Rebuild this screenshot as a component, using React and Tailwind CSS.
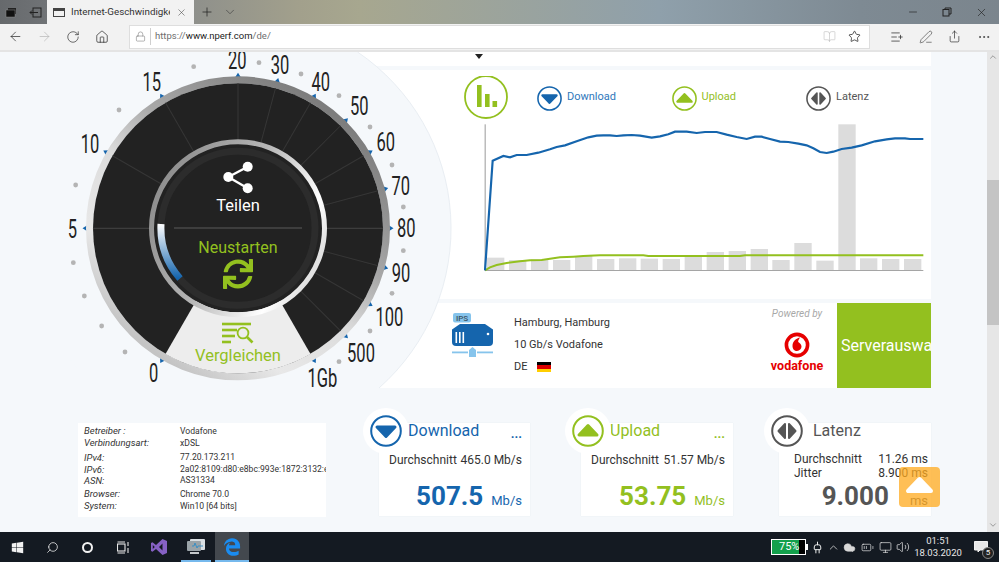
import React from "react";
import {
  X, Plus, ChevronDown, Minus, ArrowLeft, ArrowRight, RotateCw, Home, Lock,
  BookOpen, Star, ListPlus, Share, MoreHorizontal, Search, PenLine, ChevronUp,
  Cloud, Volume2, Monitor, Plug, BatteryMedium,
} from "lucide-react";
import { FaWindows, FaSync, FaEdgeLegacy } from "react-icons/fa";

const BLUE = "#1565ad";
const GREEN = "#93c01f";
const GREY = "#555555";

const ticks = [-150, -90, -60, -30, 0, 15, 30, 45, 60, 75, 90, 105, 120, 135, 150];
const lines = [-90, -60, -30, 0, 15, 30, 45, 60, 75, 90, 105, 120, 135];

const gaugeLabels = [
  ["20", 562, 30], ["30", 690, 45], ["40", 812, 97], ["50", 928, 168], ["60", 1007, 277],
  ["70", 1052, 407], ["80", 1069, 535], ["90", 1053, 668], ["100", 1018, 800], ["500", 933, 910],
  ["1Gb", 817, 985], ["0", 311, 970], ["5", 67, 537], ["10", 120, 283], ["15", 305, 95],
];

const dots = [
  [431, 50], [207, 180], [77, 405], [70, 638], [103, 738], [155, 828], [225, 906], [627, 38],
  [753, 72], [867, 137], [960, 231], [1026, 345], [1060, 471], [1060, 602], [1026, 730],
  [960, 843], [867, 935],
];

const bars = [
  [141, 593], [207, 600], [273, 598], [339, 600], [405, 588], [471, 597], [537, 595], [602, 596],
  [668, 597], [734, 590], [800, 576], [866, 573], [932, 567], [997, 600], [1063, 549], [1129, 602],
  [1195, 193], [1260, 595], [1326, 597], [1392, 597],
];

const downloadLine =
  "135,631 158,302 190,288 210,292 230,285 260,285 295,278 330,268 350,261 375,256 410,244 445,232 470,227 490,226 510,226 530,228 550,226 575,225 600,227 635,233 660,229 685,223 705,215 740,215 770,219 795,216 830,216 860,224 890,231 920,237 945,230 965,230 990,237 1020,245 1045,246 1075,251 1100,256 1120,265 1140,276 1160,279 1180,275 1205,267 1235,263 1265,256 1305,244 1340,238 1365,235 1395,235 1410,237 1450,237";
const uploadLine =
  "135,631 150,622 170,615 200,609 240,604 270,601 305,600 330,596 360,592 400,590 430,588 480,586 610,586 625,588 900,588 915,586 1450,586";

const RoundIcon = ({ kind, size = 24 }) => {
  const color = kind === "down" ? BLUE : kind === "up" ? GREEN : GREY;
  return (
    <svg width={size} height={size} viewBox="0 0 32 32" className="shrink-0">
      <circle cx="16" cy="16" r="14.8" fill="none" stroke={color} strokeWidth="2" />
      {kind === "down" && (
        <polygon points="7,12 25,12 16,21.5" fill={color} stroke={color} strokeWidth="3" strokeLinejoin="round" />
      )}
      {kind === "up" && (
        <polygon points="7,20 25,20 16,10.5" fill={color} stroke={color} strokeWidth="3" strokeLinejoin="round" />
      )}
      {kind === "lat" && (
        <>
          <polygon points="14,9 14,23 7.5,16" fill={color} stroke={color} strokeWidth="2" strokeLinejoin="round" />
          <polygon points="18,9 18,23 24.5,16" fill={color} stroke={color} strokeWidth="2" strokeLinejoin="round" />
        </>
      )}
    </svg>
  );
};

const Gauge = () => {
  const cx = 238;
  const cy = 228.3;
  return (
    <svg className="absolute left-0 top-0" width="460" height="480" viewBox="0 52 460 480">
      <defs>
        <linearGradient id="outerRing" x1="0.8" y1="0.1" x2="0.2" y2="0.9">
          <stop offset="0" stopColor="#7d7d7d" />
          <stop offset="0.35" stopColor="#a8a8a8" />
          <stop offset="0.55" stopColor="#dcdcdc" />
          <stop offset="0.8" stopColor="#e8e8e8" />
          <stop offset="1" stopColor="#c4c4c4" />
        </linearGradient>
        <linearGradient id="innerRing" x1="0.05" y1="0.25" x2="0.95" y2="0.7">
          <stop offset="0" stopColor="#8f8f8f" />
          <stop offset="0.45" stopColor="#b5b5b5" />
          <stop offset="0.85" stopColor="#ffffff" />
          <stop offset="1" stopColor="#e2e2e2" />
        </linearGradient>
        <linearGradient id="speedArc" gradientUnits="userSpaceOnUse" x1="0" y1="224" x2="0" y2="278">
          <stop offset="0" stopColor="#ffffff" />
          <stop offset="1" stopColor={BLUE} />
        </linearGradient>
      </defs>

      <circle cx={cx} cy={cy} r="213" fill="#f5f8fb" />
      <path d="M357.5 52 A213 213 0 0 1 379 388" fill="none" stroke="#e9eef3" strokeWidth="1" />

      {dots.map(([x, y]) => (
        <circle key={`${x}-${y}`} cx={x / 3 + 50} cy={y / 3 + 50} r="2.4" fill="#b4b4b4" />
      ))}
      {ticks.map((a) => (
        <polygon
          key={a}
          points={`${cx - 3.5},${cy - 150} ${cx + 3.5},${cy - 150} ${cx},${cy - 155.5}`}
          fill={BLUE}
          transform={`rotate(${a} ${cx} ${cy})`}
        />
      ))}

      <circle cx={cx} cy={cy} r="148.5" fill="none" stroke="url(#outerRing)" strokeWidth="7" />
      <circle cx={cx} cy={cy} r="145" fill="#222222" />
      <path d="M238 228.3 L165.5 353.9 A145 145 0 0 0 310.5 353.9 Z" fill="#ededed" />
      {lines.map((a) => (
        <line
          key={a}
          x1={cx}
          y1={cy - 145}
          x2={cx}
          y2={cy - 85}
          stroke={a === 90 || a === -90 ? "#454545" : "#363636"}
          strokeWidth="1"
          transform={`rotate(${a} ${cx} ${cy})`}
        />
      ))}

      <circle cx={cx} cy={cy} r="84" fill="#222222" />
      <circle cx={cx} cy={cy} r="86.5" fill="none" stroke="url(#innerRing)" strokeWidth="5" />
      <circle cx={cx} cy={cy} r="77" fill="none" stroke="#2c2c2c" strokeWidth="7" />
      <path d="M161 224 A77 77 0 0 0 180 278.5" fill="none" stroke="url(#speedArc)" strokeWidth="7" />
      <line x1="174" y1="228" x2="302" y2="228" stroke="#484848" strokeWidth="1.5" />

      <g stroke="#ffffff" strokeWidth="2.4">
        <line x1="247.7" y1="166.7" x2="228.3" y2="177" />
        <line x1="228.3" y1="177" x2="247.7" y2="188.3" />
      </g>
      <circle cx="247.7" cy="166.7" r="5" fill="#ffffff" />
      <circle cx="228.3" cy="177" r="5" fill="#ffffff" />
      <circle cx="247.7" cy="188.3" r="5" fill="#ffffff" />
      <text x={cx} y="211" textAnchor="middle" fontFamily="Roboto" fontSize="16.5" fill="#ffffff">Teilen</text>
      <text x={cx} y="253" textAnchor="middle" fontFamily="Roboto" fontSize="16" fill={GREEN}>Neustarten</text>
      <FaSync x="223" y="259" size="30" color={GREEN} />

      <g stroke={GREEN} strokeWidth="2.6">
        <line x1="222" y1="324" x2="251" y2="324" />
        <line x1="222" y1="330" x2="237" y2="330" />
        <line x1="222" y1="336" x2="235" y2="336" />
        <line x1="222" y1="342" x2="231" y2="342" />
      </g>
      <circle cx="243" cy="333" r="5.4" fill="none" stroke={GREEN} strokeWidth="1.8" />
      <line x1="247" y1="337" x2="252.5" y2="342.5" stroke={GREEN} strokeWidth="2.6" />
      <text x={cx} y="361" textAnchor="middle" fontFamily="Roboto" fontSize="16.5" fill={GREEN}>Vergleichen</text>

      {gaugeLabels.map(([t, x, y]) => (
        <text
          key={t}
          transform={`translate(${x / 3 + 50} ${y / 3 + 50}) scale(0.66 1)`}
          textAnchor="middle"
          dominantBaseline="central"
          fontFamily="Roboto"
          fontSize="25"
          fill="#222222"
        >
          {t}
        </text>
      ))}
    </svg>
  );
};

const LegendItem = ({ kind, label, color }) => (
  <div className="flex w-[134.5px] items-center gap-[5px]">
    <RoundIcon kind={kind} size={25} />
    <span className="mb-[2px] text-[11px]" style={{ color }}>{label}</span>
  </div>
);

const ChartPanel = () => (
  <div className="mt-[4px] h-[229px] bg-white pl-[164px] pt-[6px]">
    <div className="flex h-[44px] items-center">
      <svg width="44" height="44" viewBox="0 0 44 44" className="shrink-0">
        <circle cx="22" cy="21" r="21" fill="none" stroke={GREEN} strokeWidth="1.8" />
        <rect x="13" y="9" width="4.6" height="22" fill={GREEN} />
        <rect x="21" y="18" width="4.6" height="13" fill={GREEN} />
        <rect x="28.5" y="25" width="4.6" height="6" fill={GREEN} />
      </svg>
      <div className="ml-[29px] flex">
        <LegendItem kind="down" label="Download" color="#2f78bb" />
        <LegendItem kind="up" label="Upload" color={GREEN} />
        <LegendItem kind="lat" label="Latenz" color={GREY} />
      </div>
    </div>
    <svg width="441" height="152" viewBox="132 180 1323 456" className="ml-[20px] block">
      {bars.map(([x, y]) => (
        <rect key={x} x={x} y={y} width="52" height={631 - y} fill="#dcdcdc" />
      ))}
      <line x1="135.5" y1="193" x2="135.5" y2="632" stroke="#9a9a9a" strokeWidth="3" />
      <line x1="135" y1="631.5" x2="1450" y2="631.5" stroke="#a5a5a5" strokeWidth="3" />
      <polyline points={uploadLine} fill="none" stroke={GREEN} strokeWidth="6" />
      <polyline points={downloadLine} fill="none" stroke={BLUE} strokeWidth="6.5" />
    </svg>
  </div>
);

const ServerPanel = () => (
  <div className="mt-[4px] flex h-[85px] bg-white pl-[152px]">
    <svg width="42" height="46" viewBox="0 0 42 46" className="mt-[9px] shrink-0">
      <rect x="1" y="1" width="18" height="9.5" rx="2" fill="#86c4ec" />
      <text x="10" y="8.8" textAnchor="middle" fontFamily="Roboto" fontSize="8" fontWeight="500" fill="#3a4f60">IPS</text>
      <path d="M8 12 H33 L41 17.5 V30 Q41 34 37 34 H4 Q0 34 0 30 V17.5 Z" fill={BLUE} />
      <rect x="3.5" y="20" width="1.6" height="11" fill="#ffffff" />
      <rect x="7" y="20" width="1.6" height="11" fill="#ffffff" />
      <rect x="10.5" y="20" width="1.6" height="11" fill="#ffffff" />
      <circle cx="36" cy="22" r="1.3" fill="#ffffff" />
      <rect x="0" y="39.5" width="16" height="1.8" fill="#86c4ec" />
      <rect x="25" y="39.5" width="16" height="1.8" fill="#86c4ec" />
      <path d="M17 38 L20.5 35 L24 38 V45 H17 Z" fill="#86c4ec" />
    </svg>
    <div className="ml-[20px] flex w-[251px] flex-col pt-[10px] text-[11px] leading-[20px] text-[#333333]">
      <div>Hamburg, Hamburg</div>
      <div className="mt-[2px]">10 Gb/s Vodafone</div>
      <div className="mt-[2px] flex items-center">
        DE
        <span className="ml-[10px] flex h-[10px] w-[14px] flex-col">
          <span className="h-1/3 bg-black" />
          <span className="h-1/3 bg-[#dd0000]" />
          <span className="h-1/3 bg-[#ffce00]" />
        </span>
      </div>
    </div>
    <div className="flex w-[64px] shrink-0 flex-col items-center">
      <div className="mt-[3px] whitespace-nowrap text-[10px] italic text-[#a8a8a8]">Powered by</div>
      <svg width="26" height="26" viewBox="0 0 26 26" className="mt-[11px]">
        <circle cx="13" cy="13" r="10.6" fill="none" stroke="#e60000" strokeWidth="3.6" />
        <path d="M16.5 5.5 C12 6 8.5 9.5 8.5 14 C8.5 17 10.5 19 13 19 C15.6 19 17.5 17 17.5 14.6 C17.5 12 15.5 11 14.2 10 C14.2 8 15 6.5 16.5 5.5 Z" fill="#e60000" />
      </svg>
      <div className="mt-[1px] text-[12.5px] font-bold leading-[14px] text-[#e60000]">vodafone</div>
    </div>
    <div className="ml-[8px] flex w-[94px] shrink-0 items-center overflow-hidden bg-[#93c01f] pl-[4px] text-[16px] text-white">
      <span className="whitespace-nowrap">Serverauswahl</span>
    </div>
  </div>
);

const infoGroups = [
  { mt: "mt-[2px]", h: "leading-[12px]", rows: [["Betreiber :", "Vodafone"], ["Verbindungsart:", "xDSL"]] },
  {
    mt: "mt-[3px]",
    h: "leading-[11.5px]",
    rows: [["IPv4:", "77.20.173.211"], ["IPv6:", "2a02:8109:d80:e8bc:993e:1872:3132:e"], ["ASN:", "AS31334"]],
  },
  { mt: "mt-[1.5px]", h: "leading-[12px]", rows: [["Browser:", "Chrome 70.0"], ["System:", "Win10 [64 bits]"]] },
];

const InfoCard = () => (
  <div className="relative z-10 h-[94px] w-[248px] shrink-0 overflow-hidden bg-white pl-[6px] text-[9.5px] text-[#333333]">
    {infoGroups.map((g) => (
      <div key={g.rows[0][0]} className={`${g.mt} ${g.h} grid grid-cols-[96px_1fr]`}>
        {g.rows.map(([k, v]) => (
          <React.Fragment key={k}>
            <span className="italic">{k}</span>
            <span className="whitespace-nowrap text-[8.6px]">{v}</span>
          </React.Fragment>
        ))}
      </div>
    ))}
  </div>
);

const SpeedCard = ({ kind, title, color, avg, value, unit, dotted, ml, width }) => (
  <div className={`relative z-10 h-[93px] shrink-0 bg-white pl-[10px] pr-[8px] shadow-[0_0_1px_#dfe5ea] ${ml} ${width}`}>
    <div className="absolute -left-[16px] -top-[15px] flex h-[46px] w-[46px] items-center justify-center rounded-full bg-white">
      <RoundIcon kind={kind} size={32} />
    </div>
    <div className="flex h-[16px] items-center justify-between pl-[19px]">
      <span className="text-[16px] leading-[16px]" style={{ color }}>{title}</span>
      <span className="mt-[5px] text-[13px] font-bold leading-[16px]" style={{ color }}>{dotted}</span>
    </div>
    <div className="mt-[13px] flex justify-between whitespace-nowrap text-[12px] leading-[16px] text-[#333333]">
      <span>Durchschnitt</span>
      <span>{avg}</span>
    </div>
    <div className="mt-[10px] flex items-baseline justify-end" style={{ color }}>
      <span className="text-[26px] font-bold leading-[36px]">{value}</span>
      <span className="ml-[8px] text-[13px] leading-[36px]">{unit}</span>
    </div>
  </div>
);

const LatencyCard = () => (
  <div className="relative z-10 ml-[46px] h-[93px] w-[152px] shrink-0 bg-white pl-[15px] pr-[3px] shadow-[0_0_1px_#dfe5ea]">
    <div className="absolute -left-[15px] -top-[15px] flex h-[46px] w-[46px] items-center justify-center rounded-full bg-white">
      <RoundIcon kind="lat" size={32} />
    </div>
    <div className="flex h-[16px] items-center pl-[19px] text-[16px] leading-[16px] text-[#555555]">Latenz</div>
    <div className="mt-[13px] whitespace-nowrap text-[12px] leading-[14px] text-[#333333]">
      <div className="flex justify-between"><span>Durchschnitt</span><span>11.26 ms</span></div>
      <div className="flex justify-between"><span>Jitter</span><span>8.900 ms</span></div>
    </div>
    <div className="-mt-[2px] flex items-baseline justify-end text-[#555555]">
      <span className="text-[26px] font-bold leading-[36px]">9.000</span>
      <span className="ml-[21px] text-[13px] leading-[36px]">ms</span>
    </div>
    <div className="absolute left-[120px] top-[44px] flex h-[40px] w-[41px] items-start justify-center rounded-[4px] bg-[#ffaa1e]/75 pt-[9px]">
      <svg width="29" height="18" viewBox="0 0 29 18">
        <polygon points="3,15 26,15 14.5,3" fill="#ffffff" stroke="#ffffff" strokeWidth="4" strokeLinejoin="round" />
      </svg>
    </div>
  </div>
);

const TitleBar = () => (
  <div className="flex h-[24px] shrink-0 items-center bg-[linear-gradient(90deg,#66696c_0%,#85888b_14%,#a2a08c_30%,#a7a78f_36%,#8fa0ab_66%,#7e8a93_86%,#7b858d_100%)]">
    <svg width="47" height="24" viewBox="0 0 47 24" className="shrink-0">
      <rect x="8" y="8" width="8" height="6" fill="#222222" />
      <rect x="6" y="10" width="9" height="7" fill="#111111" stroke="#8a8a8a" strokeWidth="0.5" />
      <rect x="33" y="8" width="8" height="9" fill="none" stroke="#222222" />
      <path d="M38 12.5 H30 M32 10.5 L30 12.5 L32 14.5" fill="none" stroke="#222222" />
    </svg>
    <div className="flex h-full w-[147px] shrink-0 items-center bg-[#f2f2f2] pl-[6px] text-[#333333]">
      <span className="h-[9px] w-[12px] border border-[#444444] border-t-[3px]" />
      <span className="ml-[6px] w-[99px] overflow-hidden whitespace-nowrap text-[9.8px]">Internet-Geschwindigkeit</span>
      <X size={11} strokeWidth={1.2} className="ml-[6px] text-[#444444]" />
    </div>
    <Plus size={14} strokeWidth={1.3} className="ml-[6px] text-[#222222]" />
    <ChevronDown size={14} strokeWidth={1.2} className="ml-[9px] text-[#444444]" />
    <div className="flex-1" />
    <Minus size={12} strokeWidth={1.3} className="text-[#222222]" />
    <svg width="10" height="10" viewBox="0 0 10 10" className="ml-[23px]">
      <rect x="1" y="2.5" width="6" height="6.5" fill="none" stroke="#222222" />
      <path d="M3 2.5 V1 H9 V7 H7" fill="none" stroke="#222222" />
    </svg>
    <X size={13} strokeWidth={1.2} className="ml-[23px] mr-[11px] text-[#222222]" />
  </div>
);

const ToolBar = () => (
  <div className="flex h-[28px] shrink-0 items-center border-b-[2px] border-[#e4e4e4] bg-[#f2f2f2] pb-[1px]">
    <div className="flex w-[129px] shrink-0 items-center pl-[8px]">
      <ArrowLeft size={15} strokeWidth={1.1} className="text-[#222222]" />
      <ArrowRight size={15} strokeWidth={1.1} className="ml-[14px] text-[#b5b5b5]" />
      <RotateCw size={14} strokeWidth={1.1} className="ml-[14px] text-[#222222]" />
      <Home size={14} strokeWidth={1.2} className="ml-[15px] text-[#222222]" />
    </div>
    <div className="flex h-[24px] w-[741px] shrink-0 items-center border border-[#dedede] bg-white pl-[5px] text-[9.5px]">
      <Lock size={11} strokeWidth={1.2} className="text-[#777777]" />
      <span className="ml-[4px] mr-[4px] h-[17px] w-px bg-[#cfcfcf]" />
      <span className="text-[#6e6e6e]">https://</span>
      <span className="text-[#222222]">www.nperf.com</span>
      <span className="text-[#6e6e6e]">/de/</span>
      <div className="flex-1" />
      <BookOpen size={13} strokeWidth={1.1} className="text-[#bdbdbd]" />
      <Star size={13} strokeWidth={1.4} className="ml-[12px] mr-[8px] text-[#222222]" />
    </div>
    <ListPlus size={14} strokeWidth={1.2} className="ml-[20px] text-[#222222]" />
    <PenLine size={14} strokeWidth={1.1} className="ml-[15px] text-[#444444]" />
    <Share size={13} strokeWidth={1.2} className="ml-[15px] text-[#222222]" />
    <MoreHorizontal size={14} strokeWidth={1.3} className="ml-[16px] text-[#333333]" />
  </div>
);

const Scrollbar = () => (
  <div className="flex w-[12px] shrink-0 flex-col items-center justify-between bg-[#e6e6e6] pb-[2px]">
    <div className="flex w-full flex-col items-center">
      <ChevronUp size={10} className="text-[#8a8a8a]" />
      <div className="mt-[118px] h-[145px] w-full bg-[#c4c4c4]" />
    </div>
    <ChevronDown size={10} className="text-[#8a8a8a]" />
  </div>
);

const TaskBar = () => (
  <div className="flex h-[30px] shrink-0 items-center bg-[#141a22] text-[#f2f2f2]">
    <div className="flex w-[34px] justify-center"><FaWindows size={13} /></div>
    <div className="flex w-[36px] justify-center"><Search size={13} strokeWidth={1.4} className="-scale-x-100" /></div>
    <div className="flex w-[35px] justify-center">
      <span className="h-[11px] w-[11px] rounded-full border-[2px] border-[#f2f2f2]" />
    </div>
    <div className="flex w-[36px] justify-center">
      <svg width="13" height="13" viewBox="0 0 13 13" fill="none" stroke="#e8e8e8" strokeWidth="1.1">
        <rect x="0.5" y="3" width="7.5" height="7" />
        <path d="M0.5 1 H8 M0.5 12 H8 M11 1 V5 M11 7 V12" />
      </svg>
    </div>
    <div className="flex w-[36px] justify-center">
      <svg width="18" height="18" viewBox="0 0 18 18">
        <path d="M12.5 1 L17 3 V15 L12.5 17 L6 11 L2.5 13.8 L1 13 V5 L2.5 4.2 L6 7 Z M12.5 5.5 L9 9 L12.5 12.5 Z M2.8 7 V11 L4.8 9 Z" fill="#8661c5" fillRule="evenodd" />
      </svg>
    </div>
    <div className="relative flex h-full w-[38px] justify-center pt-[6px]">
      <svg width="18" height="17" viewBox="0 0 18 17">
        <rect x="3" y="1" width="15" height="11" rx="1" fill="#d8dee2" />
        <rect x="0" y="3" width="14" height="10" rx="1" fill="#9aa3a8" />
        <path d="M5 8 L7 8 L8 5 L10 10 L11 8 L16 8" fill="none" stroke="#3a8fc4" />
        <rect x="3" y="14" width="9" height="2" fill="#c4c8cb" />
      </svg>
      <span className="absolute bottom-0 left-[4px] h-[2px] w-[30px] bg-[#76b9ed]" />
    </div>
    <div className="relative flex h-full w-[34px] items-center justify-center bg-[#43484e]">
      <FaEdgeLegacy size={18} color="#1a8cf0" />
      <span className="absolute bottom-0 left-0 h-[2px] w-full bg-[#76b9ed]" />
    </div>
    <div className="flex-1" />
    <div className="relative flex h-[16px] w-[35px] items-center border border-white bg-black text-[11px] text-white">
      <span className="absolute inset-y-0 left-0 w-[27px] bg-[#13a04c]" />
      <span className="relative ml-[7px]">75%</span>
    </div>
    <span className="h-[6px] w-[2px] bg-white" />
    <Plug size={13} strokeWidth={1.8} className="ml-[3px] rotate-180" />
    <ChevronUp size={13} strokeWidth={1.3} className="ml-[3px]" />
    <Cloud size={13} fill="#d8d8d8" strokeWidth={1} className="ml-[3px] text-[#d8d8d8]" />
    <BatteryMedium size={13} strokeWidth={1.2} className="ml-[5px]" />
    <Monitor size={13} strokeWidth={1.2} className="ml-[5px]" />
    <Volume2 size={14} strokeWidth={1.2} className="ml-[4px]" />
    <div className="ml-[5px] flex w-[46px] flex-col items-center text-[9.5px] leading-[12px] text-[#e8e8e8]">
      <span>01:51</span>
      <span className="whitespace-nowrap">18.03.2020</span>
    </div>
    <div className="relative ml-[13px] mr-[11px]">
      <svg width="14" height="12" viewBox="0 0 14 12" fill="none" stroke="#f2f2f2">
        <path d="M0.5 0.5 H13.5 V9 H6 L4 11 V9 H0.5 Z" fill="#e8e8e8" />
      </svg>
      <span className="absolute -bottom-[6px] -right-[6px] flex h-[12px] w-[12px] items-center justify-center rounded-full border border-[#888888] bg-[#222222] text-[8px] leading-none">5</span>
    </div>
  </div>
);

const App = () => {
  return (
    <div className="flex h-[562px] w-[999px] flex-col overflow-hidden font-['Roboto',sans-serif]">
      <TitleBar />
      <ToolBar />
      <main className="flex min-h-0 flex-1 overflow-hidden bg-[#f5f8fb]">
        <div className="relative min-w-0 flex-1">
          <div className="ml-[300px] w-[631px]">
            <div className="h-[14px] bg-white" />
            <ChartPanel />
            <ServerPanel />
          </div>
          <Gauge />
          <svg width="8" height="5" viewBox="0 0 8 5" className="absolute left-[475px] top-[2px]">
            <polygon points="0,0 8,0 4,5" fill="#222222" />
          </svg>
          <div className="mt-[35px] flex pl-[78px]">
            <InfoCard />
            <SpeedCard kind="down" title="Download" color={BLUE} avg="465.0 Mb/s" value="507.5" unit="Mb/s" dotted="..." ml="ml-[53px]" width="w-[151px]" />
            <SpeedCard kind="up" title="Upload" color={GREEN} avg="51.57 Mb/s" value="53.75" unit="Mb/s" dotted="..." ml="ml-[51px]" width="w-[152px]" />
            <LatencyCard />
          </div>
        </div>
        <Scrollbar />
      </main>
      <TaskBar />
    </div>
  );
};

export default App;
